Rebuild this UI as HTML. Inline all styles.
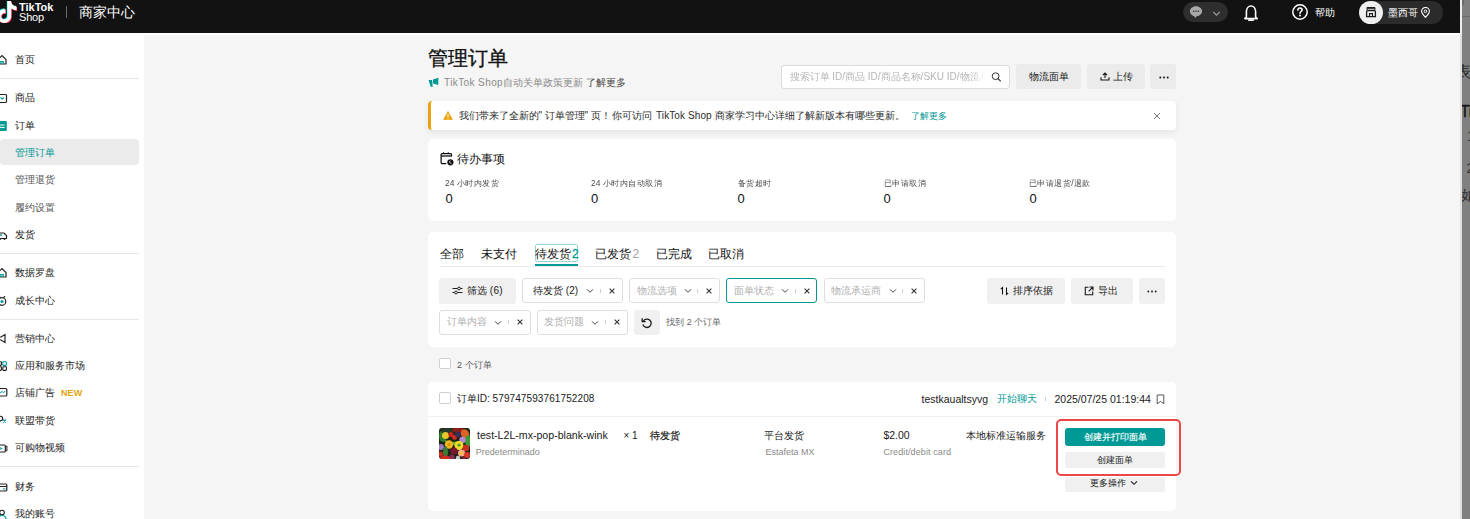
<!DOCTYPE html>
<html><head><meta charset="utf-8">
<style>
*{box-sizing:border-box;margin:0;padding:0}
html,body{width:1470px;height:519px;overflow:hidden}
body{position:relative;background:#f5f5f5;font-family:"Liberation Sans",sans-serif;color:#121212}
.a{position:absolute;white-space:nowrap}
#hdr{position:absolute;left:0;top:0;width:1460px;height:33.3px;background:#121212}
#hline{position:absolute;left:0;top:33.3px;width:1460px;height:1.7px;background:#fff}
#side{position:absolute;left:0;top:34px;width:144px;height:485px;background:#fff}
.si{position:absolute;left:15px;font-size:10px;line-height:20px;color:#333}
.sdiv{position:absolute;left:0;width:139px;height:1px;background:#e6e6e6}
.ic{position:absolute;left:-2px}
.card{position:absolute;background:#fff;border-radius:5px}
.btn{position:absolute;background:#ebebeb;border-radius:3px}
.sel{position:absolute;border:1px solid #dedede;border-radius:3px;background:#fff}
#strip{position:absolute;left:1460px;top:0;width:10px;height:519px;background:#808080;border-left:2px solid #dfdfdf;overflow:hidden}
</style></head><body>

<!-- HEADER -->
<div id="hdr">
<svg class="a" style="left:-4px;top:1px" width="22" height="22" viewBox="0 0 24 24">
<defs><path id="tt" d="M12.525.02c1.31-.02 2.61-.01 3.91-.02.08 1.53.63 3.090 1.75 4.17 1.12 1.11 2.7 1.62 4.24 1.79v4.03c-1.44-.05-2.890-.35-4.2-.97-.57-.26-1.1-.59-1.62-.93-.01 2.92.01 5.84-.02 8.75-.08 1.4-.54 2.79-1.35 3.94-1.31 1.92-3.58 3.17-5.91 3.21-1.43.08-2.86-.31-4.080-1.03-2.02-1.19-3.44-3.37-3.65-5.71-.02-.5-.03-1-.01-1.49.18-1.9 1.12-3.72 2.58-4.96 1.66-1.44 3.98-2.13 6.150-1.72.02 1.48-.04 2.96-.04 4.44-.99-.32-2.15-.23-3.020.37-.63.41-1.11 1.04-1.36 1.75-.21.51-.15 1.070-.14 1.61.24 1.64 1.82 3.020 3.5 2.87 1.12-.01 2.19-.66 2.77-1.61.19-.33.4-.67.41-1.06.1-1.79.06-3.57.07-5.36.01-4.03-.01-8.05.02-12.07z"/></defs>
<use href="#tt" fill="#25f4ee" transform="translate(-0.7,-0.7)"/>
<use href="#tt" fill="#fe2c55" transform="translate(0.7,0.7)"/>
<use href="#tt" fill="#fff"/>
</svg>
<div class="a" id="lg1" style="left:19px;top:1.5px;font-size:11px;line-height:11px;font-weight:bold;color:#fff;">TikTok</div>
<div class="a" id="lg2" style="left:19px;top:11.8px;font-size:11px;line-height:11px;color:#fff;letter-spacing:-0.2px">Shop</div>
<div class="a" style="left:66px;top:6px;width:1px;height:12px;background:#6a6a6a"></div>
<div class="a" id="hd" style="left:79px;top:2px;font-size:14px;line-height:20px;color:#fff">商家中心</div>
<div class="a" style="left:1183px;top:2px;width:45px;height:20px;border-radius:10px;background:#2e2e2e"></div>
<svg class="a" style="left:1189px;top:5px" width="14" height="14" viewBox="0 0 14 14"><path d="M7 1.2C3.6 1.2 0.9 3.5 0.9 6.3c0 2.3 1.8 4.2 4.3 4.9l1.2 1.9 1.3-1.8C10.6 10.9 13.1 8.9 13.1 6.3 13.1 3.5 10.4 1.2 7 1.2z" fill="#a8a8a8"/><circle cx="4.6" cy="6.3" r=".8" fill="#2e2e2e"/><circle cx="7" cy="6.3" r=".8" fill="#2e2e2e"/><circle cx="9.4" cy="6.3" r=".8" fill="#2e2e2e"/></svg>
<svg class="a" style="left:1212px;top:10px" width="9" height="7" viewBox="0 0 9 7"><path d="M1.3 2l3.2 3.2L7.7 2" fill="none" stroke="#9a9a9a" stroke-width="1.1"/></svg>
<svg class="a" style="left:1243px;top:4px" width="16" height="18" viewBox="0 0 16 18"><path d="M3.4 13V7.6C3.4 4.6 5.3 2 8 2s4.6 2.6 4.6 5.6V13l1.6 1.6H1.8z" fill="none" stroke="#fff" stroke-width="1.6" stroke-linejoin="round"/><path d="M6 16.2h4" stroke="#fff" stroke-width="1.8" stroke-linecap="round"/></svg>
<svg class="a" style="left:1291px;top:3px" width="18" height="18" viewBox="0 0 18 18"><circle cx="9" cy="9" r="7.2" fill="none" stroke="#fff" stroke-width="1.5"/><path d="M6.9 7.1c0-1.2.9-2.1 2.1-2.1s2.1.9 2.1 2c0 1.5-2.1 1.5-2.1 3.2" fill="none" stroke="#fff" stroke-width="1.6" stroke-linecap="round"/><circle cx="9" cy="12.6" r="1" fill="#fff"/></svg>
<div class="a" style="left:1315px;top:3px;font-size:10px;line-height:20px;color:#fff;font-weight:500">帮助</div>
<div class="a" style="left:1362px;top:1px;width:81px;height:22.5px;border-radius:11px;background:#2b2b2b"></div>
<div class="a" style="left:1359px;top:0.5px;width:23.5px;height:23.5px;border-radius:50%;background:#efefef"></div>
<svg class="a" style="left:1364.5px;top:6px" width="12" height="12" viewBox="0 0 12 12"><path d="M1.6 5.2V1.9Q1.6 1 2.5 1h7Q10.4 1 10.4 1.9v3.3z" fill="#1a1a1a"/><path d="M1.6 5v5.6h8.8V5" fill="none" stroke="#1a1a1a" stroke-width="1.3"/><path d="M4.5 10.6V7.6h3v3" fill="none" stroke="#1a1a1a" stroke-width="1.1"/><path d="M2.5 3.3h7" stroke="#efefef" stroke-width=".9"/></svg>
<div class="a" style="left:1388px;top:2.5px;font-size:10px;line-height:20px;color:#fff;font-weight:500">墨西哥</div>
<svg class="a" style="left:1420px;top:7px" width="11" height="11" viewBox="0 0 11 11"><path d="M5.5 10.3C3.3 8 1.6 6.2 1.6 4.3a3.9 3.9 0 0 1 7.8 0c0 1.9-1.7 3.7-3.9 6z" fill="none" stroke="#fff" stroke-width="1.1"/><circle cx="5.5" cy="4.3" r="1.3" fill="none" stroke="#fff" stroke-width="1"/></svg>
</div>

<!-- SIDEBAR -->
<div id="hline"></div>
<div id="side">
<div class="a" style="left:0;top:105.2px;width:138.7px;height:26px;border-radius:4px;background:#ebebeb"></div>
<div class="sdiv" style="top:44.0px"></div>
<div class="sdiv" style="top:219.0px"></div>
<div class="sdiv" style="top:284.9px"></div>
<div class="sdiv" style="top:432.1px"></div>
<div class="si" style="top:15.8px;color:#222">首页</div>
<svg class="a" style="left:-3px;top:20.0px" width="11" height="12" viewBox="0 0 11 12"><path d="M1 5.5L5 1.5l4 4V10H1z" fill="none" stroke="#222" stroke-width="1.2"/><path d="M3.8 10V7.6h2.4V10" fill="none" stroke="#009995" stroke-width="1.2"/></svg>
<div class="si" style="top:54.4px;color:#222">商品</div>
<svg class="a" style="left:-3px;top:58.6px" width="11" height="12" viewBox="0 0 11 12"><rect x="1" y="1.5" width="8.5" height="8" rx="1" fill="none" stroke="#222" stroke-width="1.2"/><path d="M3.5 4.5l1.75 1.6L7 4.5" fill="none" stroke="#009995" stroke-width="1.1"/></svg>
<div class="si" style="top:81.8px;color:#222">订单</div>
<svg class="a" style="left:-3px;top:86.0px" width="11" height="12" viewBox="0 0 11 12"><rect x="0.8" y="1" width="9" height="10" rx="1.3" fill="#009995"/><path d="M3 5h4.6M3 7.4h4.6" stroke="#fff" stroke-width="1"/></svg>
<div class="si" style="top:108.8px;color:#009995">管理订单</div>
<div class="si" style="top:136.4px;color:#555">管理退货</div>
<div class="si" style="top:163.7px;color:#555">履约设置</div>
<div class="si" style="top:191.4px;color:#222">发货</div>
<svg class="a" style="left:-3px;top:195.6px" width="11" height="12" viewBox="0 0 11 12"><path d="M1 3h6l2.5 2.5V8.5H1z" fill="none" stroke="#222" stroke-width="1.2"/><path d="M1 5h4" stroke="#009995" stroke-width="1.4"/><circle cx="3" cy="9" r="1" fill="#222"/><circle cx="7.5" cy="9" r="1" fill="#222"/></svg>
<div class="si" style="top:229.2px;color:#222">数据罗盘</div>
<svg class="a" style="left:-3px;top:233.4px" width="11" height="12" viewBox="0 0 11 12"><path d="M1 5.5L5 1.5l4 4V10H1z" fill="none" stroke="#222" stroke-width="1.2"/><path d="M3.8 10V7.6h2.4V10" fill="none" stroke="#009995" stroke-width="1.2"/></svg>
<div class="si" style="top:256.7px;color:#222">成长中心</div>
<svg class="a" style="left:-3px;top:260.9px" width="11" height="12" viewBox="0 0 11 12"><circle cx="5" cy="6.5" r="3.8" fill="none" stroke="#222" stroke-width="1.2"/><circle cx="5" cy="6.5" r="1.6" fill="#009995"/><path d="M2 1.2l1.5 1.5M8 1.2L6.5 2.7" stroke="#222" stroke-width="1.1"/></svg>
<div class="si" style="top:295.1px;color:#222">营销中心</div>
<svg class="a" style="left:-3px;top:299.3px" width="11" height="12" viewBox="0 0 11 12"><path d="M1 4h3l4-2.5v8L4 7H1z" fill="none" stroke="#222" stroke-width="1.2"/><path d="M2 7.5v2.5" stroke="#009995" stroke-width="1.3"/></svg>
<div class="si" style="top:322.3px;color:#222">应用和服务市场</div>
<svg class="a" style="left:-3px;top:326.5px" width="11" height="12" viewBox="0 0 11 12"><rect x="0.8" y="0.8" width="3.6" height="3.6" rx=".6" fill="none" stroke="#222" stroke-width="1.1"/><rect x="5.8" y="0.8" width="3.6" height="3.6" rx=".6" fill="none" stroke="#009995" stroke-width="1.1"/><rect x="0.8" y="5.8" width="3.6" height="3.6" rx=".6" fill="none" stroke="#222" stroke-width="1.1"/><rect x="5.8" y="5.8" width="3.6" height="3.6" rx=".6" fill="none" stroke="#222" stroke-width="1.1"/></svg>
<div class="si" style="top:349.0px;color:#222">店铺广告<span style="position:absolute;left:46px;top:0;font-size:9px;font-weight:bold;color:#e8a30f;letter-spacing:.1px">NEW</span></div>
<svg class="a" style="left:-3px;top:353.2px" width="11" height="12" viewBox="0 0 11 12"><rect x="0.8" y="1.5" width="9" height="7.5" rx="1" fill="none" stroke="#222" stroke-width="1.2"/><path d="M3 6l2-1.5 1.5 1L8.5 4" fill="none" stroke="#009995" stroke-width="1"/></svg>
<div class="si" style="top:376.6px;color:#222">联盟带货</div>
<svg class="a" style="left:-3px;top:380.8px" width="11" height="12" viewBox="0 0 11 12"><circle cx="3.5" cy="3.5" r="2.2" fill="none" stroke="#222" stroke-width="1.1"/><path d="M0.5 10c0-2.5 1.5-3.8 3-3.8" fill="none" stroke="#222" stroke-width="1.1"/><path d="M6 4.5l3 3M9 4.5l-3 3" stroke="#009995" stroke-width="1.1"/></svg>
<div class="si" style="top:404.3px;color:#222">可购物视频</div>
<svg class="a" style="left:-3px;top:408.5px" width="11" height="12" viewBox="0 0 11 12"><rect x="0.8" y="2" width="7.5" height="7" rx="1" fill="none" stroke="#222" stroke-width="1.2"/><path d="M8.3 4l1.6-1v5l-1.6-1" fill="none" stroke="#222" stroke-width="1"/><path d="M3.3 4v3l2.4-1.5z" fill="#009995"/></svg>
<div class="si" style="top:443.3px;color:#222">财务</div>
<svg class="a" style="left:-3px;top:447.5px" width="11" height="12" viewBox="0 0 11 12"><rect x="0.8" y="2" width="9" height="7" rx="1" fill="none" stroke="#222" stroke-width="1.2"/><path d="M0.8 4.5h9" stroke="#222" stroke-width="1"/><path d="M6 7h2.5" stroke="#009995" stroke-width="1.1"/></svg>
<div class="si" style="top:470.3px;color:#222">我的账号</div>
<svg class="a" style="left:-3px;top:474.5px" width="11" height="12" viewBox="0 0 11 12"><circle cx="5" cy="3.5" r="2.3" fill="none" stroke="#222" stroke-width="1.1"/><path d="M1 10.5c0-2.5 1.8-4 4-4s4 1.5 4 4" fill="none" stroke="#009995" stroke-width="1.2"/></svg>
</div>

<!-- MAIN -->
<div class="a" id="title" style="left:428px;top:48px;font-size:20px;line-height:20px;font-weight:500;-webkit-text-stroke:0.35px #121212;color:#121212">管理订单</div>
<svg class="a" style="left:428px;top:77px" width="11" height="11" viewBox="0 0 11 11"><path d="M0.6 2.9h3.5l.6 6.9H2.7z" fill="#009995"/><path d="M5 2.6l5.3-1.8v7.2L5 6.5z" fill="#009995"/></svg>
<div class="a" id="sub" style="left:444px;top:72.5px;font-size:10px;line-height:20px;color:#8a8a8a"><span style="letter-spacing:.4px">TikTok Shop</span>自动关单政策更新 <span style="color:#444">了解更多</span></div>
<div class="a" style="left:780.5px;top:64.7px;width:229.6px;height:24.7px;border:1px solid #dcdcdc;border-radius:3px;background:#fff"></div>
<div class="a" id="ph" style="left:789.5px;top:66.5px;font-size:10px;line-height:20px;color:#b5b5b5;width:195px;overflow:hidden;-webkit-mask-image:linear-gradient(90deg,#000 93%,transparent)">搜索订单 ID/商品 ID/商品名称/SKU ID/物流单号</div>
<svg class="a" style="left:990.5px;top:72px" width="11" height="10" viewBox="0 0 11 10"><circle cx="4.6" cy="4.2" r="3.4" fill="none" stroke="#333" stroke-width="1"/><path d="M7.1 6.7l2.3 2.3" stroke="#333" stroke-width="1.1" stroke-linecap="round"/></svg>
<div class="btn" style="left:1016.3px;top:64.2px;width:64.6px;height:25.3px"></div>
<div class="a" id="b1" style="left:1029px;top:67px;font-size:10px;line-height:20px;font-weight:500;color:#1a1a1a">物流面单</div>
<div class="btn" style="left:1087px;top:64.2px;width:57.5px;height:25.3px"></div>
<svg class="a" style="left:1099.5px;top:72px" width="10" height="9" viewBox="0 0 10 9"><path d="M5 6V1M2.8 3.2L5 1l2.2 2.2M1 5.2V8h8V5.2" fill="none" stroke="#1a1a1a" stroke-width="1.1"/></svg>
<div class="a" id="b2" style="left:1112.5px;top:67px;font-size:10px;line-height:20px;font-weight:500;color:#1a1a1a">上传</div>
<div class="btn" style="left:1150.4px;top:64.2px;width:25.7px;height:25.3px"></div>
<svg class="a" style="left:1158.5px;top:75.5px" width="10" height="3" viewBox="0 0 10 3"><circle cx="1.3" cy="1.5" r="1" fill="#1a1a1a"/><circle cx="5" cy="1.5" r="1" fill="#1a1a1a"/><circle cx="8.7" cy="1.5" r="1" fill="#1a1a1a"/></svg>

<div class="a" style="left:428px;top:101.2px;width:748.2px;height:28.7px;background:#fff;border-radius:4px;box-shadow:0 2px 6px rgba(0,0,0,.08);border-left:3px solid #e8a30f"></div>
<svg class="a" style="left:442.5px;top:110.8px" width="10" height="9" viewBox="0 0 10 9"><path d="M5 0.4L9.7 8.8H0.3z" fill="#e8a30f" stroke="#e8a30f" stroke-width=".5" stroke-linejoin="round"/><path d="M5 3.2v2.6" stroke="#fff" stroke-width="1.1"/><circle cx="5" cy="7.1" r=".6" fill="#fff"/></svg>
<div class="a" id="al" style="left:458.5px;top:105.5px;font-size:10px;line-height:20px;color:#2a2a2a">我们带来了全新的<span style="margin-right:2.5px">"</span>订单管理<span style="margin-right:2.5px">"</span>页！<span style="margin-left:1px">你</span>可访问<span style="letter-spacing:.1px;margin-left:1.5px"> TikTok Shop </span>商家学习中心详细了解新版本有哪些更新。</div>
<div class="a" id="al2" style="left:911px;top:105.5px;font-size:9px;line-height:20px;color:#009995">了解更多</div>
<svg class="a" style="left:1153px;top:112.3px" width="8" height="8" viewBox="0 0 8 8"><path d="M1 1l6 6M7 1L1 7" stroke="#777" stroke-width="1"/></svg>



<div class="card" style="left:428px;top:138.7px;width:748.2px;height:82px"></div>
<svg class="a" style="left:440px;top:152px" width="14" height="14" viewBox="0 0 14 14"><path d="M6.3 11.6H2.1a1 1 0 0 1-1-1V2.6a1 1 0 0 1 1-1h8.4a1 1 0 0 1 1 1V4.6" fill="none" stroke="#111" stroke-width="1.25"/><path d="M1.1 4h10.4" stroke="#111" stroke-width="1.3"/><path d="M3.5 0.3v1.6M8.2 0.3v1.6" stroke="#111" stroke-width="1.1"/><circle cx="10.4" cy="10.3" r="3.1" fill="#111"/><path d="M10.2 8.6a1.8 1.8 0 0 0 1.2 3" fill="none" stroke="#fff" stroke-width=".8"/></svg>
<div class="a" id="dbt" style="left:456.5px;top:149px;font-size:12px;line-height:20px;font-weight:500;color:#121212">待办事项</div>
<div class="a" style="left:445.4px;top:173px;font-size:9px;line-height:20px;color:#4a4a4a;transform:scale(.94);transform-origin:0 50%">24 小时内发货</div>
<div class="a" style="left:445.4px;top:189px;font-size:13px;line-height:20px;color:#121212">0</div>
<div class="a" style="left:591.1px;top:173px;font-size:9px;line-height:20px;color:#4a4a4a;transform:scale(.94);transform-origin:0 50%">24 小时内自动取消</div>
<div class="a" style="left:591.1px;top:189px;font-size:13px;line-height:20px;color:#121212">0</div>
<div class="a" style="left:737.5px;top:173px;font-size:9px;line-height:20px;color:#4a4a4a;transform:scale(.94);transform-origin:0 50%">备货超时</div>
<div class="a" style="left:737.5px;top:189px;font-size:13px;line-height:20px;color:#121212">0</div>
<div class="a" style="left:883.6px;top:173px;font-size:9px;line-height:20px;color:#4a4a4a;transform:scale(.94);transform-origin:0 50%">已申请取消</div>
<div class="a" style="left:883.6px;top:189px;font-size:13px;line-height:20px;color:#121212">0</div>
<div class="a" style="left:1029.4px;top:173px;font-size:9px;line-height:20px;color:#4a4a4a;transform:scale(.94);transform-origin:0 50%">已申请退货/退款</div>
<div class="a" style="left:1029.4px;top:189px;font-size:13px;line-height:20px;color:#121212">0</div>


<div class="card" style="left:428px;top:232.4px;width:748px;height:114.3px"></div>
<div class="a" style="left:439.5px;top:265.8px;width:725.5px;height:1px;background:#ebebeb"></div>
<div class="a" id="t1" style="left:439.5px;top:243.5px;font-size:12px;line-height:20px;font-weight:500;color:#121212">全部</div>
<div class="a" id="t2" style="left:481.4px;top:243.5px;font-size:12px;line-height:20px;font-weight:500;color:#121212">未支付</div>
<div class="a" style="left:534.7px;top:244.3px;width:43px;height:18px;border:1px solid #9ad7d3;border-radius:2px"></div>
<div class="a" id="t3" style="left:535px;top:243.5px;font-size:12px;line-height:20px;font-weight:500;color:#121212">待发货<span style="color:#009995;font-weight:normal;-webkit-text-stroke:.3px #009995;margin-left:1px;font-size:12px">2</span></div>
<div class="a" style="left:534.7px;top:264px;width:43px;height:2px;background:#009995"></div>
<div class="a" id="t4" style="left:595px;top:243.5px;font-size:12px;line-height:20px;font-weight:500;color:#121212">已发货<span style="color:#a0a0a0;font-weight:normal;margin-left:1.5px;font-size:12px">2</span></div>
<div class="a" id="t5" style="left:655.5px;top:243.5px;font-size:12px;line-height:20px;font-weight:500;color:#121212">已完成</div>
<div class="a" id="t6" style="left:708.3px;top:243.5px;font-size:12px;line-height:20px;font-weight:500;color:#121212">已取消</div>

<div class="btn" style="left:439.3px;top:278.2px;width:76.5px;height:25.4px;background:#f0f0f0"></div>
<svg class="a" style="left:452px;top:286px" width="11" height="9" viewBox="0 0 11 9"><path d="M0.5 2.5h5M8.5 2.5h2M0.5 6.5h2M5.5 6.5h5" stroke="#222" stroke-width="1.1"/><circle cx="7" cy="2.5" r="1.4" fill="none" stroke="#222" stroke-width="1"/><circle cx="4" cy="6.5" r="1.4" fill="none" stroke="#222" stroke-width="1"/></svg>
<div class="a" style="left:467px;top:280.5px;font-size:10px;line-height:20px;font-weight:500;color:#1a1a1a">筛选 <span style="letter-spacing:.3px">(6)</span></div>
<div class="sel" style="left:521.6px;top:278.4px;width:101.1px;height:24.9px;border-color:#dedede"></div>
<div class="a" style="left:533.1px;top:280.9px;font-size:10px;line-height:20px;color:#222;font-weight:500">待发货 (2)</div>
<svg class="a" style="left:586.0px;top:288.4px" width="8" height="6" viewBox="0 0 8 6"><path d="M1 1.3l3 3 3-3" fill="none" stroke="#444" stroke-width="1"/></svg>
<div class="a" style="left:599.7px;top:288.9px;width:1px;height:4px;background:#d0d0d0"></div>
<svg class="a" style="left:608.7px;top:287.9px" width="6" height="6" viewBox="0 0 6 6"><path d="M.6.6l4.8 4.8M5.4.6L.6 5.4" stroke="#333" stroke-width="1.1"/></svg>
<div class="sel" style="left:629.4px;top:278.4px;width:91.0px;height:24.9px;border-color:#dedede"></div>
<div class="a" style="left:636.6px;top:280.9px;font-size:10px;line-height:20px;color:#b0b0b0;font-weight:normal">物流选项</div>
<svg class="a" style="left:683.7px;top:288.4px" width="8" height="6" viewBox="0 0 8 6"><path d="M1 1.3l3 3 3-3" fill="none" stroke="#444" stroke-width="1"/></svg>
<div class="a" style="left:697.4px;top:288.9px;width:1px;height:4px;background:#d0d0d0"></div>
<svg class="a" style="left:706.4px;top:287.9px" width="6" height="6" viewBox="0 0 6 6"><path d="M.6.6l4.8 4.8M5.4.6L.6 5.4" stroke="#333" stroke-width="1.1"/></svg>
<div class="sel" style="left:726.4px;top:278.4px;width:91.1px;height:24.9px;border-color:#009995"></div>
<div class="a" style="left:733.6px;top:280.9px;font-size:10px;line-height:20px;color:#b0b0b0;font-weight:normal">面单状态</div>
<svg class="a" style="left:780.8px;top:288.4px" width="8" height="6" viewBox="0 0 8 6"><path d="M1 1.3l3 3 3-3" fill="none" stroke="#444" stroke-width="1"/></svg>
<div class="a" style="left:794.5px;top:288.9px;width:1px;height:4px;background:#d0d0d0"></div>
<svg class="a" style="left:803.5px;top:287.9px" width="6" height="6" viewBox="0 0 6 6"><path d="M.6.6l4.8 4.8M5.4.6L.6 5.4" stroke="#333" stroke-width="1.1"/></svg>
<div class="sel" style="left:823.9px;top:278.4px;width:101.3px;height:24.9px;border-color:#dedede"></div>
<div class="a" style="left:831.1px;top:280.9px;font-size:10px;line-height:20px;color:#b0b0b0;font-weight:normal">物流承运商</div>
<svg class="a" style="left:888.5px;top:288.4px" width="8" height="6" viewBox="0 0 8 6"><path d="M1 1.3l3 3 3-3" fill="none" stroke="#444" stroke-width="1"/></svg>
<div class="a" style="left:902.2px;top:288.9px;width:1px;height:4px;background:#d0d0d0"></div>
<svg class="a" style="left:911.2px;top:287.9px" width="6" height="6" viewBox="0 0 6 6"><path d="M.6.6l4.8 4.8M5.4.6L.6 5.4" stroke="#333" stroke-width="1.1"/></svg>
<div class="sel" style="left:439.4px;top:309.7px;width:91.2px;height:25.3px;border-color:#dedede"></div>
<div class="a" style="left:446.6px;top:312.2px;font-size:10px;line-height:20px;color:#b0b0b0;font-weight:normal">订单内容</div>
<svg class="a" style="left:493.9px;top:319.7px" width="8" height="6" viewBox="0 0 8 6"><path d="M1 1.3l3 3 3-3" fill="none" stroke="#444" stroke-width="1"/></svg>
<div class="a" style="left:507.6px;top:320.2px;width:1px;height:4px;background:#d0d0d0"></div>
<svg class="a" style="left:516.6px;top:319.2px" width="6" height="6" viewBox="0 0 6 6"><path d="M.6.6l4.8 4.8M5.4.6L.6 5.4" stroke="#333" stroke-width="1.1"/></svg>
<div class="sel" style="left:537px;top:309.7px;width:90.8px;height:25.3px;border-color:#dedede"></div>
<div class="a" style="left:544.2px;top:312.2px;font-size:10px;line-height:20px;color:#b0b0b0;font-weight:normal">发货问题</div>
<svg class="a" style="left:591.1px;top:319.7px" width="8" height="6" viewBox="0 0 8 6"><path d="M1 1.3l3 3 3-3" fill="none" stroke="#444" stroke-width="1"/></svg>
<div class="a" style="left:604.8px;top:320.2px;width:1px;height:4px;background:#d0d0d0"></div>
<svg class="a" style="left:613.8px;top:319.2px" width="6" height="6" viewBox="0 0 6 6"><path d="M.6.6l4.8 4.8M5.4.6L.6 5.4" stroke="#333" stroke-width="1.1"/></svg>
<div class="btn" style="left:634px;top:309.7px;width:25.7px;height:25.3px;background:#f0f0f0"></div>
<svg class="a" style="left:641px;top:316.5px" width="12" height="12" viewBox="0 0 12 12"><path d="M2.3 4.2A4.2 4.2 0 1 1 1.9 7.3" fill="none" stroke="#1a1a1a" stroke-width="1.3"/><path d="M1.2 1.2v3.4h3.4" fill="none" stroke="#1a1a1a" stroke-width="1.3"/></svg>
<div class="a" style="left:666.3px;top:312px;font-size:9px;line-height:20px;color:#666">找到 2 个订单</div>
<div class="btn" style="left:987.3px;top:278px;width:78px;height:25.5px;background:#f0f0f0"></div>
<svg class="a" style="left:999.5px;top:285.5px" width="9" height="10" viewBox="0 0 9 10"><path d="M2.5 8.5V1.5L.8 3.2M6.5 1.5v7l1.7-1.7" fill="none" stroke="#1a1a1a" stroke-width="1.1"/></svg>
<div class="a" style="left:1012.5px;top:280.5px;font-size:10px;line-height:20px;font-weight:500;color:#1a1a1a">排序依据</div>
<div class="btn" style="left:1071px;top:278px;width:62px;height:25.5px;background:#f0f0f0"></div>
<svg class="a" style="left:1084px;top:285.5px" width="10" height="10" viewBox="0 0 10 10"><path d="M4.5 1.3H1.3v7.4h7.4V5.5" fill="none" stroke="#1a1a1a" stroke-width="1.1"/><path d="M5.5 1h3.5v3.5M9 1L4.7 5.3" fill="none" stroke="#1a1a1a" stroke-width="1.1"/></svg>
<div class="a" style="left:1098px;top:280.5px;font-size:10px;line-height:20px;font-weight:500;color:#1a1a1a">导出</div>
<div class="btn" style="left:1138.8px;top:278px;width:26.2px;height:25.5px;background:#f0f0f0"></div>
<svg class="a" style="left:1147px;top:289.5px" width="10" height="3" viewBox="0 0 10 3"><circle cx="1.3" cy="1.5" r=".9" fill="#1a1a1a"/><circle cx="5" cy="1.5" r=".9" fill="#1a1a1a"/><circle cx="8.7" cy="1.5" r=".9" fill="#1a1a1a"/></svg>


<div class="a" style="left:439.3px;top:358.2px;width:11.5px;height:11.2px;border:1px solid #cfcfcf;border-radius:2px;background:#fff"></div>
<div class="a" style="left:457px;top:355px;font-size:9px;line-height:20px;color:#555">2 个订单</div>
<div class="card" style="left:428px;top:381.6px;width:748.2px;height:129.6px"></div>
<div class="a" style="left:428px;top:415.8px;width:748.2px;height:1px;background:#f0f0f0"></div>
<div class="a" style="left:439.3px;top:392.4px;width:11.5px;height:11.2px;border:1px solid #cfcfcf;border-radius:2px;background:#fff"></div>
<div class="a" id="oid" style="left:457px;top:388.5px;font-size:10px;line-height:20px;color:#1a1a1a">订单ID: <span style="letter-spacing:.1px">579747593761752208</span></div>
<div class="a" id="buyer" style="left:921.6px;top:388.5px;font-size:10.5px;line-height:20px;color:#1a1a1a">testkaualtsyvg</div>
<div class="a" style="left:996.5px;top:388.5px;font-size:10px;line-height:20px;color:#009995">开始聊天</div>
<div class="a" style="left:1045.3px;top:396.5px;width:1px;height:4px;background:#cfcfcf"></div>
<div class="a" id="dt" style="left:1054.5px;top:388.5px;font-size:10.5px;line-height:20px;color:#1a1a1a">2025/07/25 01:19:44</div>
<svg class="a" style="left:1155.5px;top:393.5px" width="9" height="11" viewBox="0 0 9 11"><path d="M1.2 1h6.6v8.8L4.5 7.4 1.2 9.8z" fill="none" stroke="#444" stroke-width=".9" stroke-linejoin="round"/></svg>
<svg class="a" style="left:439px;top:428px" width="31" height="31" viewBox="0 0 31 31"><defs><clipPath id="rc"><rect width="31" height="31" rx="3"/></clipPath></defs><g clip-path="url(#rc)">
<rect width="31" height="31" fill="#1d2412"/>
<ellipse cx="4" cy="8" rx="4" ry="6" fill="#2f7d2a"/>
<ellipse cx="8" cy="3" rx="6" ry="3" fill="#243a2a"/>
<ellipse cx="19" cy="2" rx="6" ry="3" fill="#8a1f1a"/>
<ellipse cx="26" cy="6" rx="4" ry="5" fill="#e0622a" transform="rotate(-30 26 6)"/>
<ellipse cx="29" cy="13" rx="3" ry="6" fill="#3f9a35"/>
<circle cx="6.5" cy="7.5" r="3.5" fill="#e6c52d"/>
<circle cx="12" cy="6.5" r="2.6" fill="#c8241c"/>
<circle cx="15.5" cy="9.5" r="2.4" fill="#d32a20"/>
<circle cx="19" cy="6.5" r="3" fill="#3b2f55"/>
<circle cx="23.5" cy="12" r="3.2" fill="#b38ad0"/>
<path d="M5 12l8 2 8-1-3 4-9 0z" fill="#5eae3a"/>
<circle cx="10" cy="16.5" r="4.2" fill="#f0b820"/>
<circle cx="10" cy="16.5" r="1.5" fill="#d89010"/>
<circle cx="20" cy="17.5" r="4.5" fill="#f2dc2a"/>
<circle cx="20" cy="17" r="1.6" fill="#4e9b2e"/>
<circle cx="2" cy="19" r="3" fill="#9a7ac0"/>
<ellipse cx="6.5" cy="24" rx="2.5" ry="6" fill="#3d7a3a"/>
<circle cx="27" cy="20" r="3.2" fill="#c92d22"/>
<circle cx="1.5" cy="26" r="2.5" fill="#c7281f"/>
<circle cx="15" cy="23" r="3.5" fill="#7a1430"/>
<circle cx="22.5" cy="25" r="3.6" fill="#f2a090"/>
<circle cx="22.5" cy="25" r="2" fill="#f0c040"/>
<circle cx="28" cy="27" r="3" fill="#d8382a"/>
<ellipse cx="6" cy="30" rx="5" ry="2.5" fill="#d02a20"/>
<circle cx="13" cy="29" r="2.5" fill="#8a2a55"/>
<circle cx="19" cy="30" r="2.2" fill="#d0c8c8"/>
<circle cx="25" cy="30.5" r="2" fill="#8a2040"/>
</g></svg>
<div class="a" id="pn" style="left:477px;top:425px;font-size:10.6px;line-height:20px;color:#1a1a1a">test-L2L-mx-pop-blank-wink</div>
<div class="a" style="left:475.7px;top:441.5px;font-size:9px;line-height:20px;color:#8a8a8a">Predeterminado</div>
<div class="a" style="left:623.4px;top:425.5px;font-size:10px;line-height:20px;color:#1a1a1a">× 1</div>
<div class="a" style="left:650.4px;top:425.5px;font-size:10px;line-height:20px;color:#1a1a1a;font-weight:500;-webkit-text-stroke:.2px #1a1a1a">待发货</div>
<div class="a" style="left:764.2px;top:425.5px;font-size:10px;line-height:20px;color:#1a1a1a">平台发货</div>
<div class="a" style="left:765.6px;top:442px;font-size:9px;line-height:20px;color:#8a8a8a">Estafeta MX</div>
<div class="a" style="left:883.4px;top:425px;font-size:10.5px;line-height:20px;color:#1a1a1a">$2.00</div>
<div class="a" style="left:883.4px;top:442px;font-size:9px;line-height:20px;color:#8a8a8a;letter-spacing:.1px">Credit/debit card</div>
<div class="a" style="left:965.8px;top:425.5px;font-size:10px;line-height:20px;color:#1a1a1a">本地标准运输服务</div>
<div class="btn" style="left:1065.2px;top:476.6px;width:99.8px;height:15.5px;background:#f0f0f0"></div>
<div class="a" style="left:1089.5px;top:473px;font-size:9px;line-height:20px;color:#1a1a1a;font-weight:500">更多操作</div>
<svg class="a" style="left:1130px;top:480px" width="8" height="6" viewBox="0 0 8 6"><path d="M1 1.3l3 3 3-3" fill="none" stroke="#1a1a1a" stroke-width="1.1"/></svg>
<div class="a" style="left:1056px;top:418.8px;width:124.8px;height:57.1px;border:2px solid #ec4646;border-radius:5px"></div>
<div class="btn" style="left:1065.2px;top:428.1px;width:99.8px;height:17.8px;background:#009995"></div>
<div class="a" style="left:1083.5px;top:427px;font-size:9px;line-height:20px;color:#fff;font-weight:500;-webkit-text-stroke:.15px #fff">创建并打印面单</div>
<div class="btn" style="left:1065.2px;top:451.7px;width:99.8px;height:16.6px;background:#f0f0f0"></div>
<div class="a" style="left:1097px;top:450px;font-size:9px;line-height:20px;color:#1a1a1a;font-weight:500">创建面单</div>

<!-- RIGHT STRIP -->
<div class="a" style="left:1460px;top:0;width:2px;height:35px;background:#efefef;z-index:2"></div>
<div id="strip">
<div class="a" style="left:0;top:16px;width:10px;height:1px;background:#6e6e6e"></div>
<div class="a" style="left:-1px;top:-3px;width:3px;height:8px;border-radius:0 0 0 3px;background:#6a6a6a"></div>
<div class="a" style="left:-7px;top:61px;font-size:16px;line-height:22px;color:#222">表</div>
<div class="a" style="left:-2px;top:101px;font-size:16px;line-height:22px;color:#151515;letter-spacing:-.5px;-webkit-text-stroke:.3px #151515">Ti</div>
<div class="a" style="left:5px;top:127px;font-size:14px;line-height:18px;color:#333">1</div>
<div class="a" style="left:4.5px;top:159px;font-size:14px;line-height:18px;color:#333">2</div>
<div class="a" style="left:-1px;top:184px;font-size:14px;line-height:22px;color:#2a2a2a">如</div>
</div>

</body></html>
